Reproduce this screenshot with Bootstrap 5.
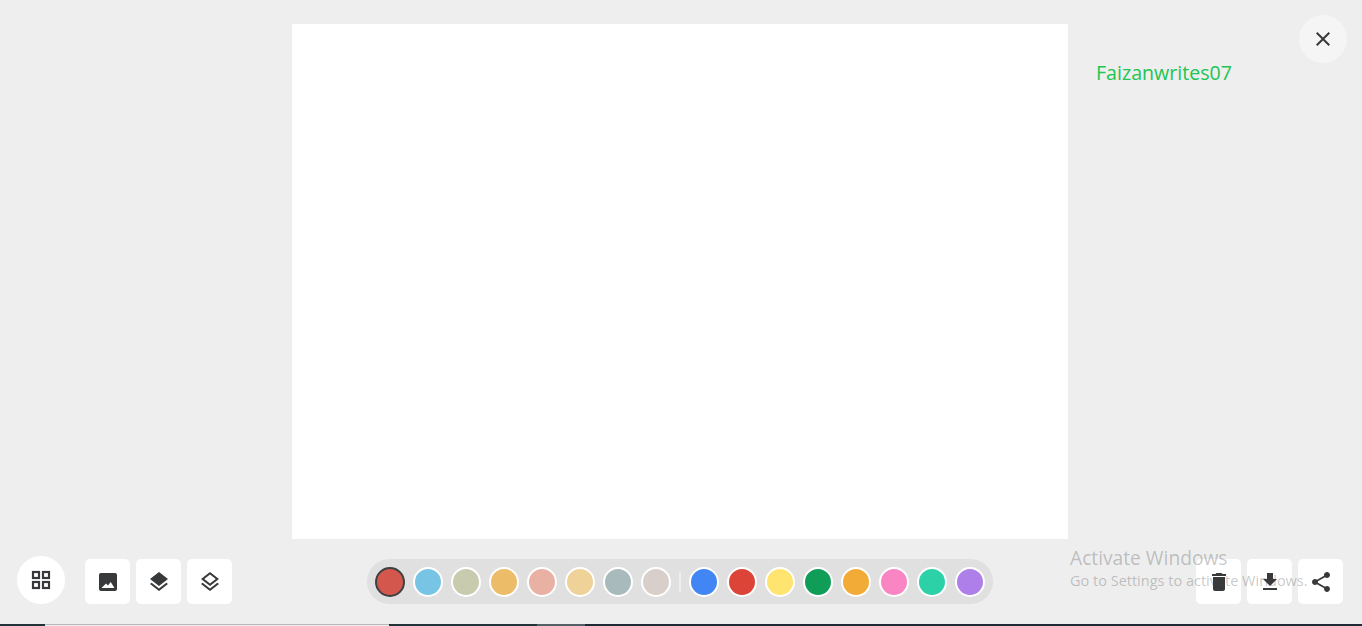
<!DOCTYPE html>
<html lang="en">
<head>
  <meta charset="UTF-8" />
  <title>Faizanwrites07</title>
  <link rel="stylesheet" href="https://cdn.jsdelivr.net/npm/bootstrap@5.3.0/dist/css/bootstrap.min.css" />
  <style>
    html, body { height: 100%; overflow: hidden; }
    body { background: #eeeeee; font-family: "Open Sans", "Noto Sans", sans-serif; }
    .app-shell { height: 626px; position: relative; }
    .stage { padding: 24px 0 0 292px; }
    .draw-sheet { width: 776px; height: 515px; background: #fff; }
    .author-tag { margin: 36px 0 0 28px; color: #20c552; font-size: 19.6px; line-height: 26px; }
    .close-round { position: absolute; top: 15px; right: 15px; width: 48px; height: 48px; background: #f5f5f5; }
    .tool-strip { margin-top: 17px; padding: 0 19px 0 17px; height: 48px; }
    .round-tool { width: 48px; height: 48px; background: #fff; margin-right: 20px; }
    .tool-group { gap: 6px; }
    .square-tool { width: 45px; height: 45px; background: #fff; border-radius: 5px; }
    .tool-icon { width: 24px; height: 24px; fill: #37393b; display: block; }
    .grid-icon { stroke: #37393b; stroke-width: .2; }
    .swatch-pill { margin-left: 135px; height: 45px; padding: 0 8px; background: #e0e0e0; border-radius: 23px; }
    .swatch-dot { width: 30px; height: 30px; border-radius: 50%; border: 2px solid #fff; }
    .swatch-dot.is-active { border-color: #3c4043; }
    .swatch-sep { width: 2px; height: 20px; background: #eeeeee; }
    .c-red { background: #d4574e; } .c-sky { background: #77c4e4; } .c-sage { background: #c9cbae; }
    .c-sand { background: #ecbc68; } .c-blush { background: #e9b0a4; } .c-wheat { background: #efd298; }
    .c-slate { background: #a9babc; } .c-mist { background: #d8cfcb; } .c-blue { background: #4285f4; }
    .c-gred { background: #db4437; } .c-yellow { background: #ffe570; } .c-green { background: #0f9d58; }
    .c-amber { background: #f2ab37; } .c-pink { background: #f986c2; } .c-teal { background: #2dd1a7; }
    .c-violet { background: #ae7fe8; }
    .activate-mark { position: absolute; left: 1070px; top: 546px; color: rgba(70, 70, 70, .3); pointer-events: none; white-space: nowrap; }
    .activate-mark .mark-title { font-size: 19.2px; line-height: 24px; }
    .activate-mark .mark-sub { font-size: 14.5px; line-height: 22px; }
    .os-bar { position: absolute; left: 0; right: 0; bottom: 0; height: 2px; background: #1e2a38; }
    .os-a { width: 45px; background: #213239; }
    .os-b { width: 344px; background: #eeeeee; border-top: 1px solid #b8b8b8; }
    .os-c { width: 148px; background: #213239; }
    .os-d { width: 48px; background: #556066; }
  </style>
</head>
<body>
  <div class="app-shell">
    <div class="stage d-flex">
      <div class="draw-sheet"></div>
      <div class="author-tag">Faizanwrites07</div>
    </div>

    <button type="button" class="btn close-round rounded-circle p-0 border-0 d-flex align-items-center justify-content-center" aria-label="Close">
      <svg class="tool-icon" viewBox="0 0 24 24"><path d="M19 6.41L17.59 5 12 10.59 6.41 5 5 6.41 10.59 12 5 17.59 6.41 19 12 13.41 17.59 19 19 17.59 13.41 12z"/></svg>
    </button>

    <div class="tool-strip d-flex align-items-end">
      <button type="button" class="btn round-tool rounded-circle p-0 border-0 d-flex align-items-center justify-content-center">
        <svg class="tool-icon grid-icon" viewBox="0 0 24 24"><path d="M3 3v8h8V3H3zm6 6H5V5h4v4zm-6 4v8h8v-8H3zm6 6H5v-4h4v4zm4-16v8h8V3h-8zm6 6h-4V5h4v4zm-6 4v8h8v-8h-8zm6 6h-4v-4h4v4z"/></svg>
      </button>
      <div class="d-flex tool-group">
        <button type="button" class="btn square-tool p-0 border-0 d-flex align-items-center justify-content-center">
          <svg class="tool-icon" viewBox="0 0 24 24"><path d="M21 19V5c0-1.100-.9-2-2-2H5c-1.100 0-2 .9-2 2v14c0 1.100.9 2 2 2h14c1.100 0 2-.9 2-2zM5.500 18l4.500-4.500 2 2 2.700-3.500 3.800 6z"/></svg>
        </button>
        <button type="button" class="btn square-tool p-0 border-0 d-flex align-items-center justify-content-center">
          <svg class="tool-icon" viewBox="0 0 24 24"><path d="M11.990 18.540l-7.370-5.730L3 14.070l9 7 9-7-1.630-1.270-7.380 5.740zM12 16l7.360-5.730L21 9l-9-7-9 7 1.630 1.270L12 16z"/></svg>
        </button>
        <button type="button" class="btn square-tool p-0 border-0 d-flex align-items-center justify-content-center">
          <svg class="tool-icon" viewBox="0 0 24 24"><path d="M11.990 18.540l-7.370-5.730L3 14.070l9 7 9-7-1.630-1.270-7.380 5.740zM12 16l7.360-5.730L21 9l-9-7-9 7 1.630 1.270L12 16zm0-11.470L17.740 9 12 13.470 6.260 9 12 4.530z"/></svg>
        </button>
      </div>

      <div class="swatch-pill d-flex align-items-center gap-2 me-auto">
        <span class="swatch-dot is-active c-red"></span>
        <span class="swatch-dot c-sky"></span>
        <span class="swatch-dot c-sage"></span>
        <span class="swatch-dot c-sand"></span>
        <span class="swatch-dot c-blush"></span>
        <span class="swatch-dot c-wheat"></span>
        <span class="swatch-dot c-slate"></span>
        <span class="swatch-dot c-mist"></span>
        <span class="swatch-sep"></span>
        <span class="swatch-dot c-blue"></span>
        <span class="swatch-dot c-gred"></span>
        <span class="swatch-dot c-yellow"></span>
        <span class="swatch-dot c-green"></span>
        <span class="swatch-dot c-amber"></span>
        <span class="swatch-dot c-pink"></span>
        <span class="swatch-dot c-teal"></span>
        <span class="swatch-dot c-violet"></span>
      </div>

      <div class="d-flex tool-group">
        <button type="button" class="btn square-tool p-0 border-0 d-flex align-items-center justify-content-center">
          <svg class="tool-icon" viewBox="0 0 24 24"><path d="M6 19c0 1.100.9 2 2 2h8c1.100 0 2-.9 2-2V7H6v12zM19 4h-3.500l-1-1h-5l-1 1H5v2h14V4z"/></svg>
        </button>
        <button type="button" class="btn square-tool p-0 border-0 d-flex align-items-center justify-content-center">
          <svg class="tool-icon" viewBox="0 0 24 24"><path d="M19 9h-4V3H9v6H5l7 7 7-7zM5 18v2h14v-2H5z"/></svg>
        </button>
        <button type="button" class="btn square-tool p-0 border-0 d-flex align-items-center justify-content-center">
          <svg class="tool-icon" viewBox="0 0 24 24"><path d="M18 16.080c-.76 0-1.440.3-1.960.77L8.910 12.700c.05-.23.09-.46.09-.7s-.04-.47-.09-.7l7.050-4.110c.54.5 1.250.81 2.040.81 1.660 0 3-1.340 3-3s-1.340-3-3-3-3 1.340-3 3c0 .24.04.47.09.7L8.040 9.810C7.500 9.310 6.790 9 6 9c-1.660 0-3 1.340-3 3s1.340 3 3 3c.79 0 1.500-.31 2.040-.81l7.120 4.160c-.05.21-.08.43-.08.65 0 1.610 1.310 2.920 2.920 2.920 1.610 0 2.920-1.310 2.920-2.920s-1.310-2.920-2.920-2.920z"/></svg>
        </button>
      </div>
    </div>

    <div class="activate-mark">
      <div class="mark-title">Activate Windows</div>
      <div class="mark-sub">Go to Settings to activate Windows.</div>
    </div>

    <div class="os-bar d-flex">
      <div class="os-a"></div>
      <div class="os-b"></div>
      <div class="os-c"></div>
      <div class="os-d"></div>
    </div>
  </div>

  <script src="https://cdn.jsdelivr.net/npm/bootstrap@5.3.0/dist/js/bootstrap.bundle.min.js"></script>
</body>
</html>
